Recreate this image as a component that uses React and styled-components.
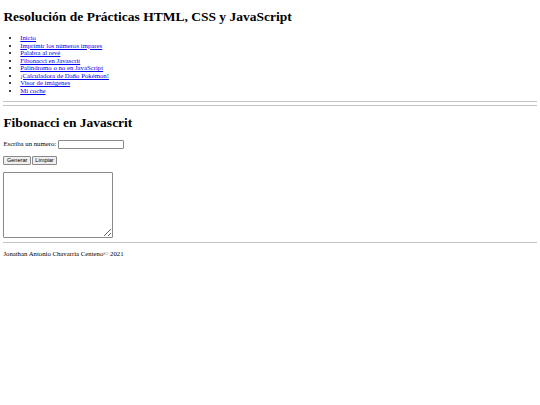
import React from "react";
import styled, { createGlobalStyle } from "styled-components";

// the page is shown at 1280px wide squeezed into 540px
const k = 540 / 1280;
const px = (n) => `${(n * k).toFixed(3)}px`;

const GlobalStyle = createGlobalStyle`
  body {
    margin: ${px(8)};
    font-family: "Liberation Serif", "Times New Roman", serif;
    font-size: ${px(16)};
    color: #000;
    background: #fff;
  }
`;

const Heading = styled.h1`
  font-size: ${px(32)};
  margin: ${(p) => (p.$top ? px(p.$top) : "0.67em")} 0 0.67em;
  font-weight: bold;
`;

const Nav = styled.ul`
  margin: 1em 0;
  padding-left: ${px(40)};
  list-style: disc;

  li {
    line-height: ${px(17.7)};
  }
`;

const NavLink = styled.a`
  color: #0000ee;
  text-decoration: underline;
`;

const Rule = styled.hr`
  margin: 0.5em 0;
  border: none;
  border-top: 1px solid #c4c4c4;
  height: 0;
`;

const Para = styled.p`
  margin: 1em 0;
`;

const NumberInput = styled.input`
  width: 66px;
  height: 9px;
  box-sizing: border-box;
  border: 1px solid #8a8a8a;
  border-radius: 1px;
  padding: 0 1px;
  margin: 0;
  font-size: ${px(13.33)};
  vertical-align: middle;
`;

const Button = styled.button`
  font-family: "Liberation Sans", Arial, sans-serif;
  font-size: ${px(13.33)};
  height: 9px;
  line-height: 1;
  padding: 0 ${px(6)};
  margin: 0 ${px(2)} 0 0;
  border: 1px solid #8a8a8a;
  border-radius: 1px;
  background: #efefef;
  color: #000;
  vertical-align: middle;
`;

const Output = styled.textarea`
  width: 110px;
  height: 66px;
  box-sizing: border-box;
  border: 1px solid #8a8a8a;
  border-radius: 1px;
  margin: 0;
  padding: 1px;
  resize: both;
`;

const Footer = styled.footer``;

const links = [
  "Inicio",
  "Imprimir los números impares",
  "Palabra al revé",
  "Fibonacci en Javascrit",
  "Palindromo o no en JavaScript",
  "¡Calculadora de Daño Pokémon!",
  "Visor de imágenes",
  "Mi coche",
];

export default function App() {
  return (
    <>
      <GlobalStyle />
      <header>
        <Heading $top={14}>Resolución de Prácticas HTML, CSS y JavaScript</Heading>
        <nav>
          <Nav>
            {links.map((l) => (
              <li key={l}>
                <NavLink href="#">{l}</NavLink>
              </li>
            ))}
          </Nav>
        </nav>
        <Rule />
      </header>
      <main>
        <Rule />
        <Heading>Fibonacci en Javascrit</Heading>
        <Para>
          Escriba un numero: <NumberInput type="text" />
        </Para>
        <Para>
          <Button>Generar</Button>
          <Button>Limpiar</Button>
        </Para>
        <Output />
      </main>
      <Footer>
        <Rule />
        <Para>Jonathan Antonio Chavarria Centeno© 2021</Para>
      </Footer>
    </>
  );
}
